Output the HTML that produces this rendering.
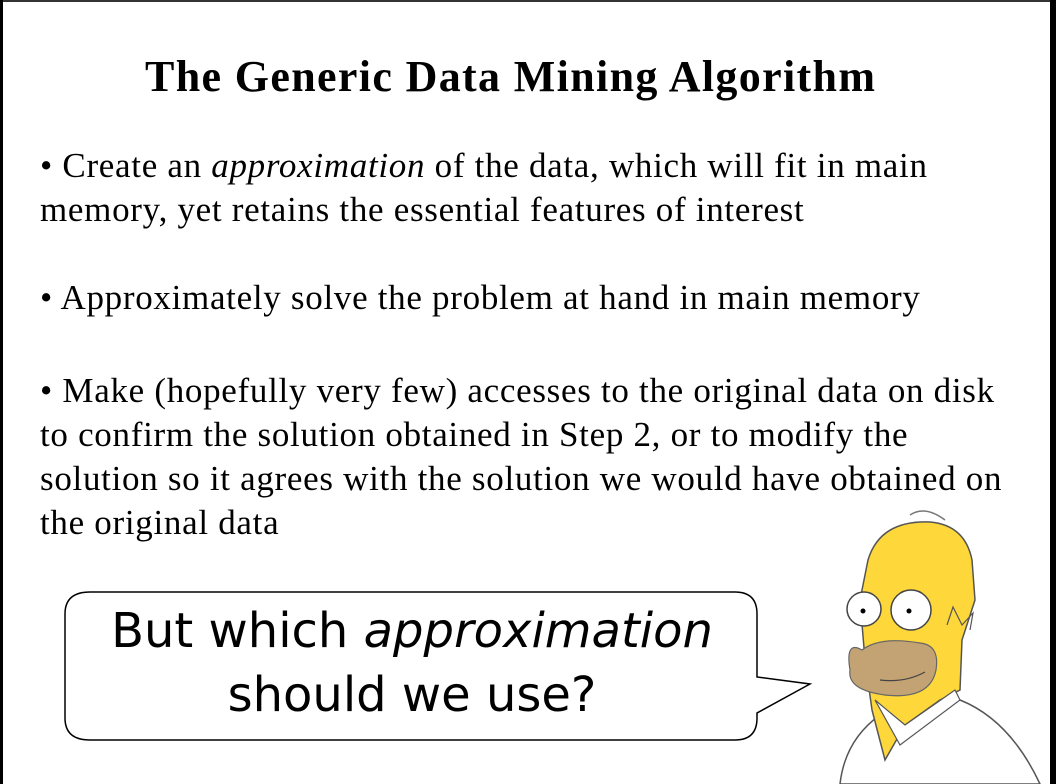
<!DOCTYPE html>
<html><head><meta charset="utf-8"><style>
html,body{margin:0;padding:0}
body{width:1056px;height:784px;position:relative;overflow:hidden;background:#fff;font-family:"Liberation Serif",serif;color:#000}
.t{position:absolute;left:145px;top:51px;font-size:44px;letter-spacing:1.35px;font-weight:bold;white-space:nowrap}
.p{position:absolute;left:40px;font-size:35px;letter-spacing:0.7px;line-height:44px;white-space:nowrap}
.b{position:absolute;font-family:"DejaVu Sans",sans-serif;font-size:48px;text-align:center;width:700px;left:62px;white-space:nowrap}
</style></head><body>
<div style="position:absolute;left:0;top:0;width:1056px;height:2px;background:#333"></div>
<div style="position:absolute;left:0;top:0;width:3px;height:784px;background:#000"></div>
<div style="position:absolute;right:0;top:0;width:6px;height:784px;background:#000"></div>
<div class="t">The Generic Data Mining Algorithm</div>
<div class="p" style="top:144px">• Create an <i>approximation</i> of the data, which will fit in main<br>memory, yet retains the essential features of interest</div>
<div class="p" style="top:276px">• Approximately solve the problem at hand in main memory</div>
<div class="p" style="top:369px">• Make (hopefully very few) accesses to the original data on disk<br>to confirm the solution obtained in Step 2, or to modify the<br>solution so it agrees with the solution we would have obtained on<br>the original data</div>
<svg style="position:absolute;left:0;top:0" width="1056" height="784">
<path d="M90 592 H735 Q757 592 757 614 V677 L810 684 L757 713 V718 Q757 740 735 740 H90 Q65 740 65 718 V614 Q65 592 90 592 Z" fill="#fff" stroke="#000" stroke-width="1.5"/>
<path d="M840 784 Q845 740 880 715 L960 700 Q1010 720 1040 784 Z" fill="#fff" stroke="#555" stroke-width="1.5"/>
<path d="M872 710 L885 760 L905 725 L940 700 L960 690 L962 640 L975 600 L972 560 Q965 525 930 522 Q880 520 868 560 L860 600 L865 660 Z" fill="#fed83a" stroke="#555" stroke-width="1.5"/>
<path d="M875 700 L900 745 L960 700 L955 690 L905 725 Z" fill="#fff" stroke="#555" stroke-width="1.2"/>
<path d="M910 515 Q925 505 945 520" fill="none" stroke="#777" stroke-width="1.5"/>
<path d="M862 650 Q845 640 850 670 Q847 690 885 695 Q930 700 936 670 Q940 645 920 643 Q880 636 862 650 Z" fill="#c3a373" stroke="#666" stroke-width="1.2"/>
<path d="M880 680 Q905 683 925 672" fill="none" stroke="#444" stroke-width="1.2"/>
<circle cx="864" cy="609" r="17" fill="#fff" stroke="#444" stroke-width="1.5"/>
<circle cx="911" cy="610" r="20" fill="#fff" stroke="#444" stroke-width="1.5"/>
<circle cx="863" cy="611" r="2.5" fill="#000"/><circle cx="909" cy="611" r="2.5" fill="#000"/>
<path d="M947 625 L953 607 L962 625 L973 613 L970 630" fill="none" stroke="#555" stroke-width="1.2"/>
</svg>
<div class="b" style="top:603px">But which <i>approximation</i></div>
<div class="b" style="top:667px">should we use?</div>
</body></html>
